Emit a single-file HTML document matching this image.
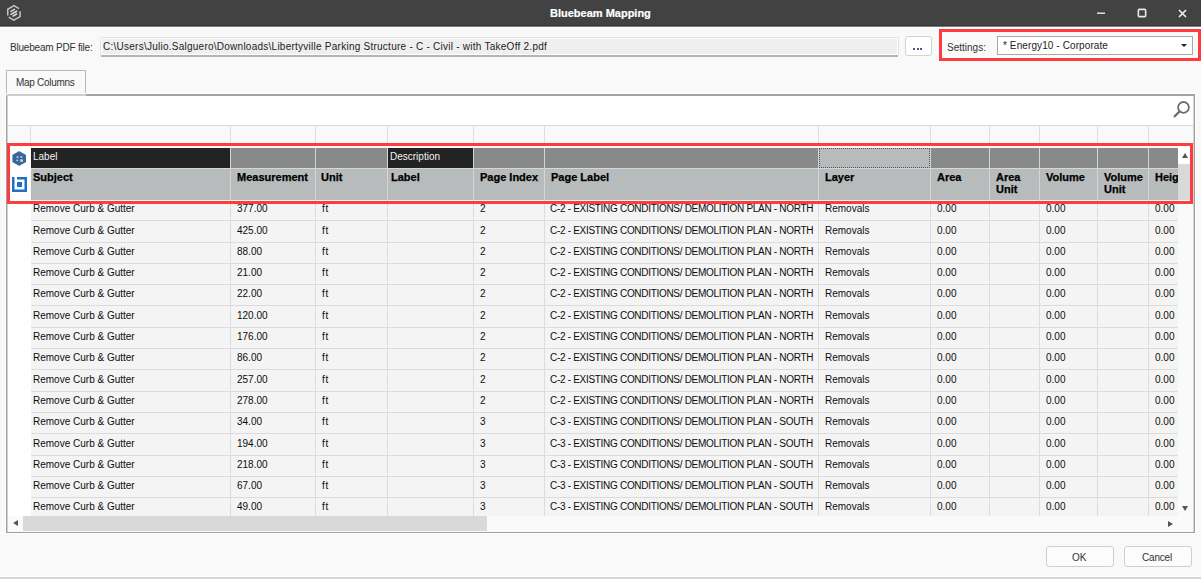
<!DOCTYPE html><html><head><meta charset="utf-8"><style>
*{margin:0;padding:0;box-sizing:border-box}
html,body{width:1201px;height:579px;overflow:hidden;background:#f9f9f9;font-family:"Liberation Sans",sans-serif;font-size:10px;color:#1e1e1e}
.a{position:absolute}
.t{position:absolute;white-space:nowrap;line-height:12px}
#title{left:0;top:0;width:1201px;height:26px;background:#424242;border-bottom:1px solid #393939}
.hd{font-weight:bold;font-size:11px;color:#000;-webkit-text-stroke:0.25px #000}
.cell{position:absolute;white-space:nowrap;line-height:12px;color:#0c0c0c}
</style></head><body>
<div id="title" class="a"></div>
<div class="a" style="left:0;top:26px;width:1201px;height:1px;background:#7c7c7c"></div>
<div class="a" style="left:0;top:27px;width:1201px;height:1px;background:#fff"></div>
<svg class="a" style="left:4px;top:2px" width="20" height="22" viewBox="0 0 20 22">
<path d="M15 6.6 L9.9 3.7 L3.75 7.25 L3.75 13.4" fill="none" stroke="#c4c4c4" stroke-width="1.5"/>
<path d="M4.7 15.2 L9.9 18.1 L16.05 14.55 L16.05 9.2" fill="none" stroke="#c4c4c4" stroke-width="1.5"/>
<path d="M7 9.4 L10.4 7.4 M7 12.4 L12.6 9.2 M9.2 14 L12.6 12" stroke="#dcdcdc" stroke-width="1.6" stroke-linecap="round"/>
</svg>
<div class="t" style="left:550px;top:7px;font-weight:bold;font-size:11px;color:#fff;-webkit-text-stroke:0.2px #fff">Bluebeam Mapping</div>
<svg class="a" style="left:1096px;top:11px" width="10" height="4" viewBox="0 0 10 4"><path d="M1 2.2H9" stroke="#e8e8e8" stroke-width="1.4"/></svg>
<svg class="a" style="left:1137px;top:8px" width="10" height="10" viewBox="0 0 10 10"><rect x="1.35" y="1.35" width="7.3" height="7.3" rx="1" fill="none" stroke="#e8e8e8" stroke-width="1.6"/></svg>
<svg class="a" style="left:1178px;top:9px" width="9" height="9" viewBox="0 0 9 9"><path d="M1 1L8 8M8 1L1 8" stroke="#ececec" stroke-width="1.7"/></svg>
<div class="t" style="left:10px;top:42px;color:#333;letter-spacing:-0.2px">Bluebeam PDF file:</div>
<div class="a" style="left:100px;top:37px;width:799px;height:18px;background:#efefef;border:1px solid #e2e2e2;border-bottom:none;border-radius:2px 2px 0 0;box-shadow:inset 1px 1px 0 #fff,inset -1px -1px 0 #fff"></div>
<div class="a" style="left:101px;top:55px;width:797px;height:2px;background:#b4b4b4"></div>
<div class="t" style="left:103px;top:41px;color:#222;letter-spacing:0.25px">C:\Users\Julio.Salguero\Downloads\Libertyville Parking Structure - C - Civil - with TakeOff 2.pdf</div>
<div class="a" style="left:905px;top:36px;width:27px;height:20px;background:#fff;border:1px solid #d2d2d2;border-radius:3px"></div>
<div class="a" style="left:913px;top:48px;width:2px;height:2px;background:#5a5080"></div>
<div class="a" style="left:917px;top:48px;width:2px;height:2px;background:#5a5080"></div>
<div class="a" style="left:920px;top:48px;width:2px;height:2px;background:#5a5080"></div>
<div class="a" style="left:939px;top:29px;width:262px;height:32px;border:3px solid #fd3c40"></div>
<div class="t" style="left:947px;top:42px;color:#333">Settings:</div>
<div class="a" style="left:997px;top:36px;width:196px;height:19px;background:#fff;border:1px solid #a8a8a8"></div>
<div class="t" style="left:1003px;top:40px;color:#222;letter-spacing:0.1px">* Energy10 - Corporate</div>
<div class="a" style="left:1181px;top:44px;width:0;height:0;border-left:3px solid transparent;border-right:3px solid transparent;border-top:3.5px solid #222"></div>
<div class="a" style="left:6px;top:70px;width:80px;height:26px;background:#f9f9f9;border:1px solid #b8b8b8;border-bottom:none"></div>
<div class="t" style="left:16px;top:77px;color:#333;letter-spacing:-0.3px">Map Columns</div>
<div class="a" style="left:6px;top:94px;width:1189px;height:439px;border:1px solid #a0a0a0;border-top:2px solid #a4a4a4;background:#fff;box-shadow:0 0 0 1px rgba(255,255,255,.9),inset 1px 0 0 #d2d2d2,inset -1px 0 0 #d2d2d2,inset 0 -1px 0 #d2d2d2"></div>
<div class="a" style="left:7px;top:93px;width:78px;height:1px;background:#fff"></div>
<div class="a" style="left:6px;top:94px;width:80px;height:2px;background:#cdcdcd"></div>
<svg class="a" style="left:1170px;top:99px" width="22" height="22" viewBox="0 0 22 22"><circle cx="13.5" cy="8.4" r="5.4" fill="none" stroke="#6e6e6e" stroke-width="1.8"/><path d="M9.6 12.4L4 18" stroke="#6e6e6e" stroke-width="2.2"/></svg>
<div class="a" style="left:8px;top:125px;width:1185px;height:1px;background:#dcdcdc"></div>
<div class="a" style="left:8px;top:126px;width:1185px;height:74px;background:#f9f9f9"></div>
<div class="a" style="left:30px;top:126px;width:1px;height:20px;background:#dedede"></div>
<div class="a" style="left:230px;top:126px;width:1px;height:20px;background:#dedede"></div>
<div class="a" style="left:315px;top:126px;width:1px;height:20px;background:#dedede"></div>
<div class="a" style="left:387px;top:126px;width:1px;height:20px;background:#dedede"></div>
<div class="a" style="left:473px;top:126px;width:1px;height:20px;background:#dedede"></div>
<div class="a" style="left:544px;top:126px;width:1px;height:20px;background:#dedede"></div>
<div class="a" style="left:818px;top:126px;width:1px;height:20px;background:#dedede"></div>
<div class="a" style="left:930px;top:126px;width:1px;height:20px;background:#dedede"></div>
<div class="a" style="left:989px;top:126px;width:1px;height:20px;background:#dedede"></div>
<div class="a" style="left:1039px;top:126px;width:1px;height:20px;background:#dedede"></div>
<div class="a" style="left:1097px;top:126px;width:1px;height:20px;background:#dedede"></div>
<div class="a" style="left:1148px;top:126px;width:1px;height:20px;background:#dedede"></div>
<div class="a" style="left:31px;top:148px;width:199px;height:20px;background:#232323"></div>
<div class="t" style="left:33px;top:151px;color:#f4f4f4">Label</div>
<div class="a" style="left:231px;top:148px;width:84px;height:20px;background:#898989"></div>
<div class="a" style="left:316px;top:148px;width:71px;height:20px;background:#898989"></div>
<div class="a" style="left:388px;top:148px;width:85px;height:20px;background:#232323"></div>
<div class="t" style="left:390px;top:151px;color:#f4f4f4">Description</div>
<div class="a" style="left:474px;top:148px;width:70px;height:20px;background:#898989"></div>
<div class="a" style="left:545px;top:148px;width:273px;height:20px;background:#898989"></div>
<div class="a" style="left:819px;top:148px;width:111px;height:20px;background:#b7bbbb;border:1px dotted #555"></div>
<div class="a" style="left:931px;top:148px;width:58px;height:20px;background:#898989"></div>
<div class="a" style="left:990px;top:148px;width:49px;height:20px;background:#898989"></div>
<div class="a" style="left:1040px;top:148px;width:57px;height:20px;background:#898989"></div>
<div class="a" style="left:1098px;top:148px;width:50px;height:20px;background:#898989"></div>
<div class="a" style="left:1149px;top:148px;width:29px;height:20px;background:#898989"></div>
<div class="a" style="left:31px;top:168px;width:1147px;height:1px;background:#d6d8d8"></div>
<div class="a" style="left:31px;top:169px;width:199px;height:31px;background:#b7bbbb;overflow:hidden"><div class="t hd" style="left:2px;top:2px;line-height:12px">Subject</div></div>
<div class="a" style="left:231px;top:169px;width:84px;height:31px;background:#b7bbbb;overflow:hidden"><div class="t hd" style="left:6px;top:2px;line-height:12px">Measurement</div></div>
<div class="a" style="left:230px;top:148px;width:1px;height:52px;background:#d4d6d6"></div>
<div class="a" style="left:316px;top:169px;width:71px;height:31px;background:#b7bbbb;overflow:hidden"><div class="t hd" style="left:5px;top:2px;line-height:12px">Unit</div></div>
<div class="a" style="left:315px;top:148px;width:1px;height:52px;background:#d4d6d6"></div>
<div class="a" style="left:388px;top:169px;width:85px;height:31px;background:#b7bbbb;overflow:hidden"><div class="t hd" style="left:3px;top:2px;line-height:12px">Label</div></div>
<div class="a" style="left:387px;top:148px;width:1px;height:52px;background:#d4d6d6"></div>
<div class="a" style="left:474px;top:169px;width:70px;height:31px;background:#b7bbbb;overflow:hidden"><div class="t hd" style="left:6px;top:2px;line-height:12px">Page Index</div></div>
<div class="a" style="left:473px;top:148px;width:1px;height:52px;background:#d4d6d6"></div>
<div class="a" style="left:545px;top:169px;width:273px;height:31px;background:#b7bbbb;overflow:hidden"><div class="t hd" style="left:6px;top:2px;line-height:12px">Page Label</div></div>
<div class="a" style="left:544px;top:148px;width:1px;height:52px;background:#d4d6d6"></div>
<div class="a" style="left:819px;top:169px;width:111px;height:31px;background:#b7bbbb;overflow:hidden"><div class="t hd" style="left:6px;top:2px;line-height:12px">Layer</div></div>
<div class="a" style="left:818px;top:148px;width:1px;height:52px;background:#d4d6d6"></div>
<div class="a" style="left:931px;top:169px;width:58px;height:31px;background:#b7bbbb;overflow:hidden"><div class="t hd" style="left:6px;top:2px;line-height:12px">Area</div></div>
<div class="a" style="left:930px;top:148px;width:1px;height:52px;background:#d4d6d6"></div>
<div class="a" style="left:990px;top:169px;width:49px;height:31px;background:#b7bbbb;overflow:hidden"><div class="t hd" style="left:6px;top:2px;line-height:12px">Area<br>Unit</div></div>
<div class="a" style="left:989px;top:148px;width:1px;height:52px;background:#d4d6d6"></div>
<div class="a" style="left:1040px;top:169px;width:57px;height:31px;background:#b7bbbb;overflow:hidden"><div class="t hd" style="left:6px;top:2px;line-height:12px">Volume</div></div>
<div class="a" style="left:1039px;top:148px;width:1px;height:52px;background:#d4d6d6"></div>
<div class="a" style="left:1098px;top:169px;width:50px;height:31px;background:#b7bbbb;overflow:hidden"><div class="t hd" style="left:6px;top:2px;line-height:12px">Volume<br>Unit</div></div>
<div class="a" style="left:1097px;top:148px;width:1px;height:52px;background:#d4d6d6"></div>
<div class="a" style="left:1149px;top:169px;width:29px;height:31px;background:#b7bbbb;overflow:hidden"><div class="t hd" style="left:6px;top:2px;line-height:12px">Height</div></div>
<div class="a" style="left:1148px;top:148px;width:1px;height:52px;background:#d4d6d6"></div>
<div class="a" style="left:8px;top:146px;width:22px;height:54px;background:#fff"></div>
<svg class="a" style="left:12px;top:151px" width="15" height="15" viewBox="0 0 15 15"><path d="M7.2 0.8L13.4 4.2V10.8L7.2 14.2L1 10.8V4.2Z" fill="#3a6699" stroke="#3a6699" stroke-width="1.2" stroke-linejoin="round"/><rect x="4.6" y="5.2" width="1.8" height="1.8" fill="#b8c8dc"/><rect x="8.4" y="5.0" width="1.8" height="1.8" fill="#b8c8dc"/><rect x="4.4" y="8.6" width="1.8" height="1.6" fill="#b8c8dc"/><rect x="8.2" y="8.4" width="2.8" height="2.4" fill="#c8d4e4"/></svg>
<svg class="a" style="left:12px;top:177px" width="15" height="15" viewBox="0 0 15 15"><g fill="#1f6fc2"><rect x="0" y="0" width="2.5" height="15"/><rect x="5" y="0" width="10" height="2.5"/><rect x="12.5" y="0" width="2.5" height="15"/><rect x="0" y="12.5" width="15" height="2.5"/><rect x="5" y="5" width="5" height="5"/></g></svg>
<div class="a" style="left:8px;top:200px;width:22px;height:316px;background:#fff"></div>
<div class="a" style="left:31px;top:200px;width:1147px;height:316px;background:#f4f4f4;overflow:hidden">
<div class="a" style="left:0;top:20.2px;width:1147px;height:1px;background:#dcdcdc"></div>
<div class="cell" style="left:2px;top:3.2px;">Remove Curb &amp; Gutter</div>
<div class="cell" style="left:206px;top:3.2px;">377.00</div>
<div class="cell" style="left:291px;top:3.2px;letter-spacing:0.8px;">ft</div>
<div class="cell" style="left:449px;top:3.2px;">2</div>
<div class="cell" style="left:519px;top:3.2px;letter-spacing:-0.3px;">C-2 - EXISTING CONDITIONS/ DEMOLITION PLAN - NORTH</div>
<div class="cell" style="left:794px;top:3.2px;">Removals</div>
<div class="cell" style="left:906px;top:3.2px;">0.00</div>
<div class="cell" style="left:1015px;top:3.2px;">0.00</div>
<div class="cell" style="left:1124px;top:3.2px;">0.00</div>
<div class="a" style="left:0;top:41.5px;width:1147px;height:1px;background:#dcdcdc"></div>
<div class="cell" style="left:2px;top:24.5px;">Remove Curb &amp; Gutter</div>
<div class="cell" style="left:206px;top:24.5px;">425.00</div>
<div class="cell" style="left:291px;top:24.5px;letter-spacing:0.8px;">ft</div>
<div class="cell" style="left:449px;top:24.5px;">2</div>
<div class="cell" style="left:519px;top:24.5px;letter-spacing:-0.3px;">C-2 - EXISTING CONDITIONS/ DEMOLITION PLAN - NORTH</div>
<div class="cell" style="left:794px;top:24.5px;">Removals</div>
<div class="cell" style="left:906px;top:24.5px;">0.00</div>
<div class="cell" style="left:1015px;top:24.5px;">0.00</div>
<div class="cell" style="left:1124px;top:24.5px;">0.00</div>
<div class="a" style="left:0;top:62.8px;width:1147px;height:1px;background:#dcdcdc"></div>
<div class="cell" style="left:2px;top:45.8px;">Remove Curb &amp; Gutter</div>
<div class="cell" style="left:206px;top:45.8px;">88.00</div>
<div class="cell" style="left:291px;top:45.8px;letter-spacing:0.8px;">ft</div>
<div class="cell" style="left:449px;top:45.8px;">2</div>
<div class="cell" style="left:519px;top:45.8px;letter-spacing:-0.3px;">C-2 - EXISTING CONDITIONS/ DEMOLITION PLAN - NORTH</div>
<div class="cell" style="left:794px;top:45.8px;">Removals</div>
<div class="cell" style="left:906px;top:45.8px;">0.00</div>
<div class="cell" style="left:1015px;top:45.8px;">0.00</div>
<div class="cell" style="left:1124px;top:45.8px;">0.00</div>
<div class="a" style="left:0;top:84.1px;width:1147px;height:1px;background:#dcdcdc"></div>
<div class="cell" style="left:2px;top:67.1px;">Remove Curb &amp; Gutter</div>
<div class="cell" style="left:206px;top:67.1px;">21.00</div>
<div class="cell" style="left:291px;top:67.1px;letter-spacing:0.8px;">ft</div>
<div class="cell" style="left:449px;top:67.1px;">2</div>
<div class="cell" style="left:519px;top:67.1px;letter-spacing:-0.3px;">C-2 - EXISTING CONDITIONS/ DEMOLITION PLAN - NORTH</div>
<div class="cell" style="left:794px;top:67.1px;">Removals</div>
<div class="cell" style="left:906px;top:67.1px;">0.00</div>
<div class="cell" style="left:1015px;top:67.1px;">0.00</div>
<div class="cell" style="left:1124px;top:67.1px;">0.00</div>
<div class="a" style="left:0;top:105.4px;width:1147px;height:1px;background:#dcdcdc"></div>
<div class="cell" style="left:2px;top:88.4px;">Remove Curb &amp; Gutter</div>
<div class="cell" style="left:206px;top:88.4px;">22.00</div>
<div class="cell" style="left:291px;top:88.4px;letter-spacing:0.8px;">ft</div>
<div class="cell" style="left:449px;top:88.4px;">2</div>
<div class="cell" style="left:519px;top:88.4px;letter-spacing:-0.3px;">C-2 - EXISTING CONDITIONS/ DEMOLITION PLAN - NORTH</div>
<div class="cell" style="left:794px;top:88.4px;">Removals</div>
<div class="cell" style="left:906px;top:88.4px;">0.00</div>
<div class="cell" style="left:1015px;top:88.4px;">0.00</div>
<div class="cell" style="left:1124px;top:88.4px;">0.00</div>
<div class="a" style="left:0;top:126.7px;width:1147px;height:1px;background:#dcdcdc"></div>
<div class="cell" style="left:2px;top:109.6px;">Remove Curb &amp; Gutter</div>
<div class="cell" style="left:206px;top:109.6px;">120.00</div>
<div class="cell" style="left:291px;top:109.6px;letter-spacing:0.8px;">ft</div>
<div class="cell" style="left:449px;top:109.6px;">2</div>
<div class="cell" style="left:519px;top:109.6px;letter-spacing:-0.3px;">C-2 - EXISTING CONDITIONS/ DEMOLITION PLAN - NORTH</div>
<div class="cell" style="left:794px;top:109.6px;">Removals</div>
<div class="cell" style="left:906px;top:109.6px;">0.00</div>
<div class="cell" style="left:1015px;top:109.6px;">0.00</div>
<div class="cell" style="left:1124px;top:109.6px;">0.00</div>
<div class="a" style="left:0;top:148.0px;width:1147px;height:1px;background:#dcdcdc"></div>
<div class="cell" style="left:2px;top:131.0px;">Remove Curb &amp; Gutter</div>
<div class="cell" style="left:206px;top:131.0px;">176.00</div>
<div class="cell" style="left:291px;top:131.0px;letter-spacing:0.8px;">ft</div>
<div class="cell" style="left:449px;top:131.0px;">2</div>
<div class="cell" style="left:519px;top:131.0px;letter-spacing:-0.3px;">C-2 - EXISTING CONDITIONS/ DEMOLITION PLAN - NORTH</div>
<div class="cell" style="left:794px;top:131.0px;">Removals</div>
<div class="cell" style="left:906px;top:131.0px;">0.00</div>
<div class="cell" style="left:1015px;top:131.0px;">0.00</div>
<div class="cell" style="left:1124px;top:131.0px;">0.00</div>
<div class="a" style="left:0;top:169.3px;width:1147px;height:1px;background:#dcdcdc"></div>
<div class="cell" style="left:2px;top:152.2px;">Remove Curb &amp; Gutter</div>
<div class="cell" style="left:206px;top:152.2px;">86.00</div>
<div class="cell" style="left:291px;top:152.2px;letter-spacing:0.8px;">ft</div>
<div class="cell" style="left:449px;top:152.2px;">2</div>
<div class="cell" style="left:519px;top:152.2px;letter-spacing:-0.3px;">C-2 - EXISTING CONDITIONS/ DEMOLITION PLAN - NORTH</div>
<div class="cell" style="left:794px;top:152.2px;">Removals</div>
<div class="cell" style="left:906px;top:152.2px;">0.00</div>
<div class="cell" style="left:1015px;top:152.2px;">0.00</div>
<div class="cell" style="left:1124px;top:152.2px;">0.00</div>
<div class="a" style="left:0;top:190.6px;width:1147px;height:1px;background:#dcdcdc"></div>
<div class="cell" style="left:2px;top:173.6px;">Remove Curb &amp; Gutter</div>
<div class="cell" style="left:206px;top:173.6px;">257.00</div>
<div class="cell" style="left:291px;top:173.6px;letter-spacing:0.8px;">ft</div>
<div class="cell" style="left:449px;top:173.6px;">2</div>
<div class="cell" style="left:519px;top:173.6px;letter-spacing:-0.3px;">C-2 - EXISTING CONDITIONS/ DEMOLITION PLAN - NORTH</div>
<div class="cell" style="left:794px;top:173.6px;">Removals</div>
<div class="cell" style="left:906px;top:173.6px;">0.00</div>
<div class="cell" style="left:1015px;top:173.6px;">0.00</div>
<div class="cell" style="left:1124px;top:173.6px;">0.00</div>
<div class="a" style="left:0;top:211.9px;width:1147px;height:1px;background:#dcdcdc"></div>
<div class="cell" style="left:2px;top:194.9px;">Remove Curb &amp; Gutter</div>
<div class="cell" style="left:206px;top:194.9px;">278.00</div>
<div class="cell" style="left:291px;top:194.9px;letter-spacing:0.8px;">ft</div>
<div class="cell" style="left:449px;top:194.9px;">2</div>
<div class="cell" style="left:519px;top:194.9px;letter-spacing:-0.3px;">C-2 - EXISTING CONDITIONS/ DEMOLITION PLAN - NORTH</div>
<div class="cell" style="left:794px;top:194.9px;">Removals</div>
<div class="cell" style="left:906px;top:194.9px;">0.00</div>
<div class="cell" style="left:1015px;top:194.9px;">0.00</div>
<div class="cell" style="left:1124px;top:194.9px;">0.00</div>
<div class="a" style="left:0;top:233.2px;width:1147px;height:1px;background:#dcdcdc"></div>
<div class="cell" style="left:2px;top:216.1px;">Remove Curb &amp; Gutter</div>
<div class="cell" style="left:206px;top:216.1px;">34.00</div>
<div class="cell" style="left:291px;top:216.1px;letter-spacing:0.8px;">ft</div>
<div class="cell" style="left:449px;top:216.1px;">3</div>
<div class="cell" style="left:519px;top:216.1px;letter-spacing:-0.3px;">C-3 - EXISTING CONDITIONS/ DEMOLITION PLAN - SOUTH</div>
<div class="cell" style="left:794px;top:216.1px;">Removals</div>
<div class="cell" style="left:906px;top:216.1px;">0.00</div>
<div class="cell" style="left:1015px;top:216.1px;">0.00</div>
<div class="cell" style="left:1124px;top:216.1px;">0.00</div>
<div class="a" style="left:0;top:254.5px;width:1147px;height:1px;background:#dcdcdc"></div>
<div class="cell" style="left:2px;top:237.5px;">Remove Curb &amp; Gutter</div>
<div class="cell" style="left:206px;top:237.5px;">194.00</div>
<div class="cell" style="left:291px;top:237.5px;letter-spacing:0.8px;">ft</div>
<div class="cell" style="left:449px;top:237.5px;">3</div>
<div class="cell" style="left:519px;top:237.5px;letter-spacing:-0.3px;">C-3 - EXISTING CONDITIONS/ DEMOLITION PLAN - SOUTH</div>
<div class="cell" style="left:794px;top:237.5px;">Removals</div>
<div class="cell" style="left:906px;top:237.5px;">0.00</div>
<div class="cell" style="left:1015px;top:237.5px;">0.00</div>
<div class="cell" style="left:1124px;top:237.5px;">0.00</div>
<div class="a" style="left:0;top:275.8px;width:1147px;height:1px;background:#dcdcdc"></div>
<div class="cell" style="left:2px;top:258.8px;">Remove Curb &amp; Gutter</div>
<div class="cell" style="left:206px;top:258.8px;">218.00</div>
<div class="cell" style="left:291px;top:258.8px;letter-spacing:0.8px;">ft</div>
<div class="cell" style="left:449px;top:258.8px;">3</div>
<div class="cell" style="left:519px;top:258.8px;letter-spacing:-0.3px;">C-3 - EXISTING CONDITIONS/ DEMOLITION PLAN - SOUTH</div>
<div class="cell" style="left:794px;top:258.8px;">Removals</div>
<div class="cell" style="left:906px;top:258.8px;">0.00</div>
<div class="cell" style="left:1015px;top:258.8px;">0.00</div>
<div class="cell" style="left:1124px;top:258.8px;">0.00</div>
<div class="a" style="left:0;top:297.1px;width:1147px;height:1px;background:#dcdcdc"></div>
<div class="cell" style="left:2px;top:280.1px;">Remove Curb &amp; Gutter</div>
<div class="cell" style="left:206px;top:280.1px;">67.00</div>
<div class="cell" style="left:291px;top:280.1px;letter-spacing:0.8px;">ft</div>
<div class="cell" style="left:449px;top:280.1px;">3</div>
<div class="cell" style="left:519px;top:280.1px;letter-spacing:-0.3px;">C-3 - EXISTING CONDITIONS/ DEMOLITION PLAN - SOUTH</div>
<div class="cell" style="left:794px;top:280.1px;">Removals</div>
<div class="cell" style="left:906px;top:280.1px;">0.00</div>
<div class="cell" style="left:1015px;top:280.1px;">0.00</div>
<div class="cell" style="left:1124px;top:280.1px;">0.00</div>
<div class="a" style="left:0;top:318.4px;width:1147px;height:1px;background:#dcdcdc"></div>
<div class="cell" style="left:2px;top:301.4px;">Remove Curb &amp; Gutter</div>
<div class="cell" style="left:206px;top:301.4px;">49.00</div>
<div class="cell" style="left:291px;top:301.4px;letter-spacing:0.8px;">ft</div>
<div class="cell" style="left:449px;top:301.4px;">3</div>
<div class="cell" style="left:519px;top:301.4px;letter-spacing:-0.3px;">C-3 - EXISTING CONDITIONS/ DEMOLITION PLAN - SOUTH</div>
<div class="cell" style="left:794px;top:301.4px;">Removals</div>
<div class="cell" style="left:906px;top:301.4px;">0.00</div>
<div class="cell" style="left:1015px;top:301.4px;">0.00</div>
<div class="cell" style="left:1124px;top:301.4px;">0.00</div>
<div class="a" style="left:199px;top:0;width:1px;height:316px;background:#dcdcdc"></div>
<div class="a" style="left:284px;top:0;width:1px;height:316px;background:#dcdcdc"></div>
<div class="a" style="left:356px;top:0;width:1px;height:316px;background:#dcdcdc"></div>
<div class="a" style="left:442px;top:0;width:1px;height:316px;background:#dcdcdc"></div>
<div class="a" style="left:513px;top:0;width:1px;height:316px;background:#dcdcdc"></div>
<div class="a" style="left:787px;top:0;width:1px;height:316px;background:#dcdcdc"></div>
<div class="a" style="left:899px;top:0;width:1px;height:316px;background:#dcdcdc"></div>
<div class="a" style="left:958px;top:0;width:1px;height:316px;background:#dcdcdc"></div>
<div class="a" style="left:1008px;top:0;width:1px;height:316px;background:#dcdcdc"></div>
<div class="a" style="left:1066px;top:0;width:1px;height:316px;background:#dcdcdc"></div>
<div class="a" style="left:1117px;top:0;width:1px;height:316px;background:#dcdcdc"></div>
</div>
<div class="a" style="left:1178px;top:146px;width:15px;height:54px;background:#fff"></div>
<div class="a" style="left:1178px;top:200px;width:15px;height:316px;background:#fafafa"></div>
<div class="a" style="left:1178px;top:164px;width:15px;height:36px;background:#d9d9d9"></div>
<div class="a" style="left:1182px;top:153px;width:0;height:0;border-left:3.5px solid transparent;border-right:3.5px solid transparent;border-bottom:5px solid #555"></div>
<div class="a" style="left:1182px;top:506px;width:0;height:0;border-left:3.5px solid transparent;border-right:3.5px solid transparent;border-top:5px solid #555"></div>
<div class="a" style="left:8px;top:516px;width:1185px;height:16px;background:#fafafa"></div>
<div class="a" style="left:23px;top:516px;width:464px;height:15px;background:#d9d9d9"></div>
<div class="a" style="left:13px;top:520px;width:0;height:0;border-top:3.5px solid transparent;border-bottom:3.5px solid transparent;border-right:5px solid #555"></div>
<div class="a" style="left:1168px;top:520.5px;width:0;height:0;border-top:3.5px solid transparent;border-bottom:3.5px solid transparent;border-left:5px solid #555"></div>
<div class="a" style="left:7px;top:143px;width:1186px;height:61px;border:3px solid #fd3c40"></div>
<div class="a" style="left:1046px;top:546px;width:68px;height:21px;background:#fcfcfc;border:1px solid #cfcfcf;border-radius:3px"></div>
<div class="t" style="left:1072px;top:552px;color:#333">OK</div>
<div class="a" style="left:1124px;top:546px;width:68px;height:21px;background:#fcfcfc;border:1px solid #cfcfcf;border-radius:3px"></div>
<div class="t" style="left:1142px;top:552px;color:#333;letter-spacing:-0.2px">Cancel</div>
<div class="a" style="left:0;top:576px;width:1201px;height:1px;background:#fff"></div>
<div class="a" style="left:0;top:577px;width:1201px;height:2px;background:#d6d6d6"></div>
</body></html>
